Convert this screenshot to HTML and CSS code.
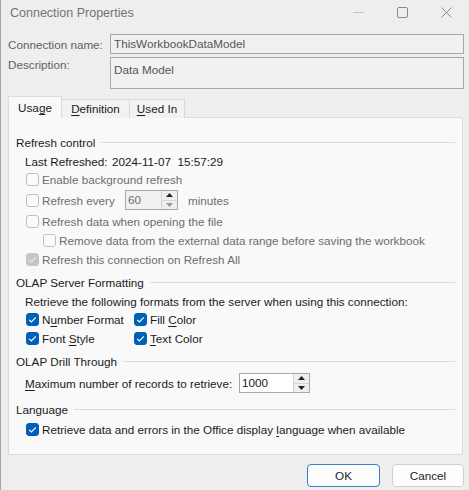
FILE: index.html
```html
<!DOCTYPE html>
<html>
<head>
<meta charset="utf-8">
<link rel="stylesheet" href="styles.css">
</head>
<body>
<div class="window">
  <div class="titlebar">
    <span class="title">Connection Properties</span>
    <div class="controls">
      <svg class="ctl" width="11" height="11" viewBox="0 0 11 11"><path d="M0 5.5H11" stroke="#c4c4c4" stroke-width="1"/></svg>
      <svg class="ctl" width="11" height="11" viewBox="0 0 11 11"><rect x="0.5" y="0.5" width="10" height="10" rx="1.5" fill="none" stroke="#8a8a8a" stroke-width="1"/></svg>
      <svg class="ctl" width="11" height="11" viewBox="0 0 11 11"><path d="M0.5 0.5L10.5 10.5M10.5 0.5L0.5 10.5" stroke="#8a8a8a" stroke-width="1"/></svg>
    </div>
  </div>

  <div class="fields">
    <div class="field">
      <span class="flabel">Connection name:</span>
      <div class="input">ThisWorkbookDataModel</div>
    </div>
    <div class="field desc">
      <span class="flabel">Description:</span>
      <div class="input textarea">Data Model</div>
    </div>
  </div>

  <div class="tabs">
    <div class="tab active t1">Usa<u>g</u>e</div>
    <div class="tab t2"><u>D</u>efinition</div>
    <div class="tab t3"><u>U</u>sed In</div>
  </div>

  <div class="panel">
    <div class="group">
      <span>Refresh control</span><span class="rule"></span>
    </div>
    <div class="row info">
      <span class="info-label">Last Refreshed:</span><span class="info-val">2024-11-07  15:57:29</span>
    </div>
    <div class="row r18 disabled">
      <span class="cb"></span><span class="lbl">Enable background refresh</span>
    </div>
    <div class="row r24 disabled">
      <span class="cb"></span><span class="lbl every">Refresh every</span>
      <div class="spin off"><span class="spin-val">60</span><span class="spin-btns"><span class="sb"><svg width="7" height="4" viewBox="0 0 7 4"><path d="M0 4L3.5 0L7 4Z" fill="#222"/></svg></span><span class="sb"><svg width="7" height="4" viewBox="0 0 7 4"><path d="M0 0L3.5 4L7 0Z" fill="#999"/></svg></span></span></div>
      <span class="lbl minutes">minutes</span>
    </div>
    <div class="row r19 disabled">
      <span class="cb"></span><span class="lbl">Refresh data when opening the file</span>
    </div>
    <div class="row r19 disabled sub">
      <span class="cb"></span><span class="lbl">Remove data from the external data range before saving the workbook</span>
    </div>
    <div class="row r18 disabled">
      <span class="cb checked-off"><svg width="13" height="13" viewBox="0 0 13 13"><path d="M3.2 6.8L5.4 9L9.8 4.4" fill="none" stroke="#e6e6e6" stroke-width="1.2"/></svg></span><span class="lbl">Refresh this connection on Refresh All</span>
    </div>

    <div class="group g2">
      <span>OLAP Server Formatting</span><span class="rule"></span>
    </div>
    <div class="row r18 text">Retrieve the following formats from the server when using this connection:</div>
    <div class="row r19 twocol">
      <div class="cell"><span class="cb on"><svg width="13" height="13" viewBox="0 0 13 13"><path d="M3.2 6.8L5.4 9L9.8 4.4" fill="none" stroke="#fff" stroke-width="1.2"/></svg></span><span class="lbl">N<u>u</u>mber Format</span></div>
      <div class="cell"><span class="cb on"><svg width="13" height="13" viewBox="0 0 13 13"><path d="M3.2 6.8L5.4 9L9.8 4.4" fill="none" stroke="#fff" stroke-width="1.2"/></svg></span><span class="lbl">Fill <u>C</u>olor</span></div>
    </div>
    <div class="row r19 twocol">
      <div class="cell"><span class="cb on"><svg width="13" height="13" viewBox="0 0 13 13"><path d="M3.2 6.8L5.4 9L9.8 4.4" fill="none" stroke="#fff" stroke-width="1.2"/></svg></span><span class="lbl">Font <u>S</u>tyle</span></div>
      <div class="cell"><span class="cb on"><svg width="13" height="13" viewBox="0 0 13 13"><path d="M3.2 6.8L5.4 9L9.8 4.4" fill="none" stroke="#fff" stroke-width="1.2"/></svg></span><span class="lbl"><u>T</u>ext Color</span></div>
    </div>

    <div class="group g3">
      <span>OLAP Drill Through</span><span class="rule"></span>
    </div>
    <div class="row r24 text">
      <span class="max-label"><u>M</u>aximum number of records to retrieve:</span>
      <div class="spin on-spin"><span class="spin-val">1000</span><span class="spin-btns"><span class="sb"><svg width="7" height="4" viewBox="0 0 7 4"><path d="M0 4L3.5 0L7 4Z" fill="#222"/></svg></span><span class="sb"><svg width="7" height="4" viewBox="0 0 7 4"><path d="M0 0L3.5 4L7 0Z" fill="#222"/></svg></span></span></div>
    </div>

    <div class="group g4">
      <span>Language</span><span class="rule"></span>
    </div>
    <div class="row r20">
      <span class="cb on"><svg width="13" height="13" viewBox="0 0 13 13"><path d="M3.2 6.8L5.4 9L9.8 4.4" fill="none" stroke="#fff" stroke-width="1.2"/></svg></span><span class="lbl">Retrieve data and errors in the Office display <u>l</u>anguage when available</span>
    </div>
  </div>

  <div class="buttons">
    <div class="btn default">OK</div>
    <div class="btn">Cancel</div>
  </div>
</div>
</body>
</html>
```

FILE: styles.css
```css
* { box-sizing: border-box; }
html, body {
  margin: 0;
  padding: 0;
  width: 469px;
  height: 490px;
  overflow: hidden;
  background: #eeeeee;
}
body {
  font-family: "Liberation Sans", Arial, sans-serif;
  font-size: 11.7px;
  color: #1b1b1b;
}
u { text-decoration: underline; text-underline-offset: 2px; }

.window {
  width: 469px;
  height: 490px;
  border-left: 1px solid #a3a3a3;
  background: #eeeeee;
}

.titlebar {
  height: 26px;
  display: flex;
  align-items: center;
  justify-content: space-between;
}
.title {
  padding-left: 9px;
  font-size: 12.5px;
  color: #737373;
}
.controls {
  display: flex;
  align-items: center;
  gap: 33px;
  padding-right: 17px;
  margin-top: -2px;
}

.fields {
  margin-top: 8px;
  padding-left: 7px;
  padding-right: 5px;
  display: flex;
  flex-direction: column;
  gap: 3px;
}
.field {
  display: flex;
  align-items: center;
  color: #5f5f5f;
}
.field.desc { align-items: flex-start; }
.flabel {
  width: 102px;
  flex: none;
}
.field.desc .flabel { padding-top: 1px; }
.input {
  flex: 1;
  height: 20px;
  border: 1px solid #a7a7a7;
  background: #f1f1f1;
  padding-left: 3px;
  line-height: 18px;
  color: #555555;
}
.input.textarea {
  height: 32px;
  line-height: 16px;
  padding-top: 4px;
}

.tabs {
  margin-top: 8px;
  margin-left: 7px;
  display: flex;
  align-items: flex-end;
  height: 21px;
  position: relative;
  z-index: 2;
}
.tab {
  height: 19px;
  line-height: 18px;
  text-align: center;
  border: 1px solid #dadada;
  border-bottom: none;
  background: #f2f2f2;
  color: #1b1b1b;
}
.tab + .tab { border-left: none; }
.t1 { width: 54px; }
.t2 { width: 68px; }
.t3 { width: 55px; }
.tab.active {
  height: 22px;
  line-height: 21px;
  background: #f9f9f9;
  border-color: #dcdcdc;
}

.panel {
  margin-top: -1px;
  margin-left: 7px;
  width: 455px;
  height: 338px;
  background: #f9f9f9;
  border: 1px solid #dcdcdc;
  padding: 14px 7px 0 7px;
  position: relative;
  z-index: 1;
}

.group {
  display: flex;
  align-items: center;
  height: 20px;
  color: #1b1b1b;
}
.group .rule {
  flex: 1;
  height: 1px;
  background: #dcdcdc;
  margin-left: 6px;
}
.g2 { margin-top: 4px; }
.g3 { margin-top: 3px; }
.g4 { margin-top: 4px; }

.row {
  display: flex;
  align-items: center;
  padding-left: 10px;
}
.row.info { height: 18px; padding-left: 9px; }
.info-label { width: 87px; }
.info-val { white-space: pre; }
.r18 { height: 18px; }
.r19 { height: 19px; }
.r20 { height: 20px; }
.r24 { height: 24px; }
.row.text { padding-left: 9px; }
.row.sub { padding-left: 27px; }

.disabled { color: #6d6d6d; }

.cb {
  width: 13px;
  height: 13px;
  flex: none;
  border: 1px solid #c0c0c0;
  border-radius: 3px;
  background: #fbfbfb;
  margin-right: 3px;
  display: flex;
}
.cb svg { margin: -1px; }
.cb.on {
  background: #005fb8;
  border-color: #005fb8;
}
.cb.checked-off {
  background: #c6c6c6;
  border-color: #c6c6c6;
}

.lbl.every { width: 83px; }
.lbl.minutes { margin-left: 10px; }

.spin {
  display: flex;
  height: 20px;
  border: 1px solid #a7a7a7;
  background: #ffffff;
}
.spin.off {
  width: 53px;
  background: #f1f1f1;
  color: #6d6d6d;
}
.spin.on-spin {
  width: 71px;
  color: #1b1b1b;
}
.spin-val {
  flex: 1;
  padding-left: 2px;
  line-height: 18px;
}
.spin-btns {
  width: 16px;
  display: flex;
  flex-direction: column;
  border-left: 1px solid #d6d6d6;
}
.sb {
  flex: 1;
  display: flex;
  align-items: center;
  justify-content: center;
  background: #efefef;
}
.sb + .sb { border-top: 1px solid #d6d6d6; }

.max-label { width: 214px; }

.twocol .cell {
  display: flex;
  align-items: center;
}
.twocol .cell:first-child { width: 108px; }

.buttons {
  margin-top: 9px;
  display: flex;
  justify-content: flex-end;
  gap: 12px;
  padding-right: 5px;
}
.btn {
  width: 72px;
  height: 23px;
  border: 1px solid #d0d0d0;
  border-radius: 4px;
  background: #fdfdfd;
  text-align: center;
  line-height: 21px;
  color: #1b1b1b;
}
.btn.default {
  width: 73px;
  border-color: #3b7cc4;
}
```
